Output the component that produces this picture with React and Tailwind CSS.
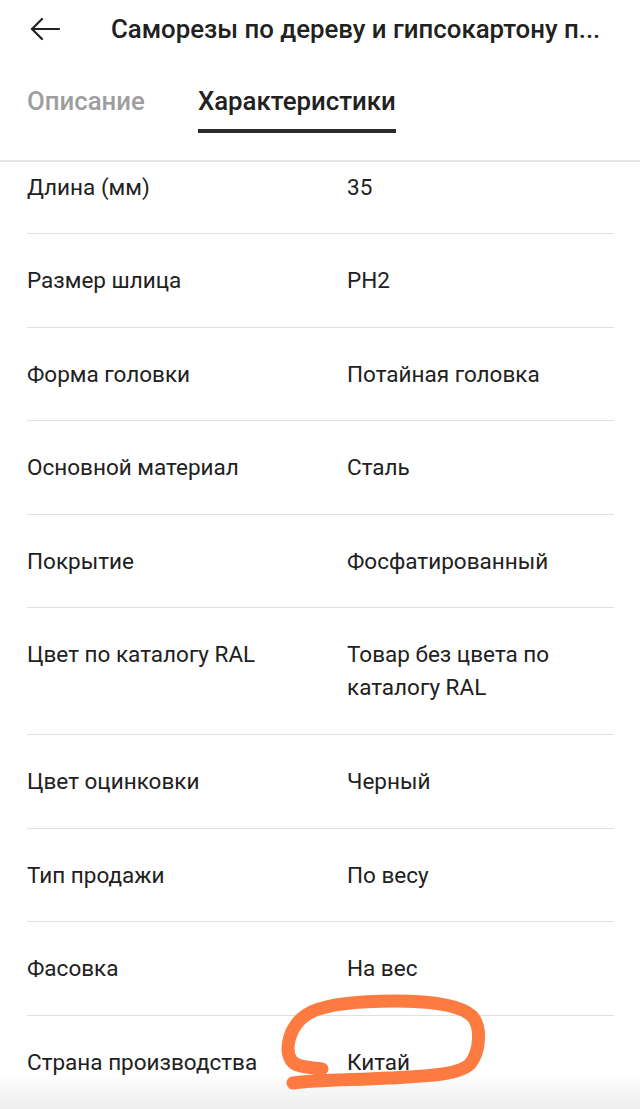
const rows = [
  ['Длина (мм)', '35'],
  ['Размер шлица', 'PH2'],
  ['Форма головки', 'Потайная головка'],
  ['Основной материал', 'Сталь'],
  ['Покрытие', 'Фосфатированный'],
  ['Цвет по каталогу RAL', 'Товар без цвета по каталогу RAL'],
  ['Цвет оцинковки', 'Черный'],
  ['Тип продажи', 'По весу'],
  ['Фасовка', 'На вес'],
  ['Страна производства', 'Китай'],
]

function BackArrow() {
  return (
    <svg width="32" height="24" viewBox="0 0 32 24" fill="none" stroke="#212121" strokeWidth="2.2" strokeLinecap="round" strokeLinejoin="round">
      <path d="M30 12H3" />
      <path d="M13 2L3 12l10 10" />
    </svg>
  )
}

export default function App() {
  return (
    <div className="relative w-[640px] h-[1109px] overflow-hidden bg-white text-[#212121]" style={{ fontFamily: 'Roboto, "Noto Sans", sans-serif' }}>
      <header className="h-[58px] flex items-center pl-[29px] pr-[30px]">
        <BackArrow />
        <h1 className="ml-[50px] text-[25.8px] font-medium truncate leading-[30px]">Саморезы по дереву и гипсокартону п...</h1>
      </header>
      <div className="h-[104px] border-b-2 border-[#e6e6e6] flex items-start gap-[53px] px-[27px] pt-[27px]">
        <div className="text-[25.8px] leading-[32px] font-medium text-[#9e9e9e]">Описание</div>
        <div className="flex flex-col">
          <span className="text-[25.8px] leading-[32px] font-medium">Характеристики</span>
          <span className="mt-[12px] h-[4px] bg-[#2b2b2b]" />
        </div>
      </div>
      <div className="overflow-hidden">
        <div className="-mt-[21.5px] mx-[27px] mr-[26px]">
          {rows.map(([k, v]) => (
            <div key={k} className="grid grid-cols-[320px_1fr] pt-[30px] pb-[29.6px] border-b border-[#e0e0e0] text-[22.5px] leading-[33px]">
              <div>{k}</div>
              <div className="pr-[40px]">{v}</div>
            </div>
          ))}
        </div>
      </div>
      <div className="absolute left-0 right-0 bottom-0 h-[36px] bg-linear-to-b from-white/0 to-[#eeeeee]" />
      <svg className="absolute inset-0 pointer-events-none" width="640" height="1109" viewBox="0 0 640 1109" fill="none">
        <path
          d="M322 1069 C310 1067 296 1068 291 1060 C284 1048 290 1026 306 1015 C322 1004 360 1001 395 1001 C430 1001 460 1005 472 1016 C482 1027 480 1052 470 1064 C458 1076 420 1076 390 1078 C350 1080 315 1080 293 1083"
          stroke="#fd7b40"
          strokeWidth="13"
          strokeLinecap="round"
          strokeLinejoin="round"
        />
      </svg>
    </div>
  )
}
